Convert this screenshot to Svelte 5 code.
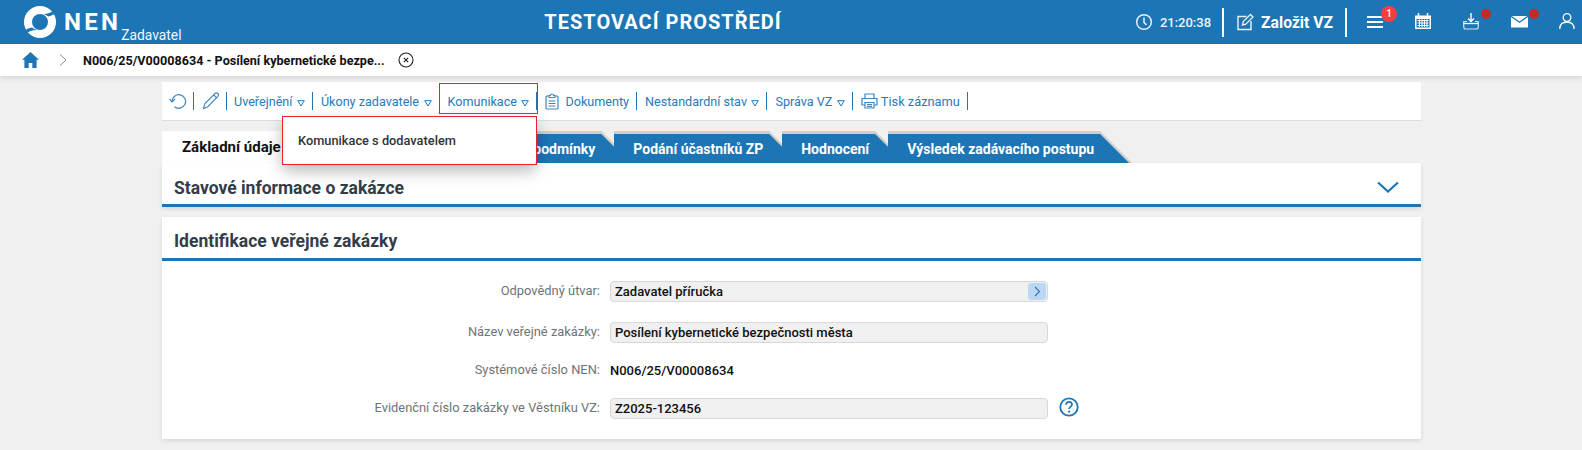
<script>
  const tabs = [
    { label: 'Zadávací podmínky', cls: 'second' },
    { label: 'Podání účastníků ZP', cls: '' },
    { label: 'Hodnocení', cls: '' },
    { label: 'Výsledek zadávacího postupu', cls: '' }
  ];
</script>

<div class="page">
  <header class="top">
    <div class="brand">
      <svg class="logo" viewBox="0 0 32 32" width="32" height="32">
        <circle cx="16" cy="16" r="12" fill="none" stroke="#fff" stroke-width="8"/>
        <path fill="#1c75b5" d="M32 3C28 6.500 24 7.800 19 8c2 .4 3.500 1.200 5 2.400C27 10 30 8.500 32 6.500Z"/>
        <path fill="#1c75b5" transform="rotate(180 16 16)" d="M32 3C28 6.500 24 7.800 19 8c2 .4 3.500 1.200 5 2.400C27 10 30 8.500 32 6.500Z"/>
      </svg>
      <span class="nen">NEN</span>
      <span class="role">Zadavatel</span>
    </div>
    <div class="env">TESTOVACÍ PROSTŘEDÍ</div>
    <div class="tools">
      <svg class="clock" viewBox="0 0 18 18" width="18" height="18"><circle cx="9" cy="9" r="7.300" fill="none" stroke="#e8f2f9" stroke-width="1.500"/><path d="M9 4.500V9.500l2.500 2.500" fill="none" stroke="#e8f2f9" stroke-width="1.500"/></svg>
      <span class="time">21:20:38</span>
      <i class="hsep first"></i>
      <svg class="edit" viewBox="0 0 18 18" width="18" height="18"><path d="M10.500 3.500H2v13h13V8" fill="none" stroke="#e8f2f9" stroke-width="1.400"/><path d="M6.500 12l.8-3.500L14.500 1.500l2.500 2.500-7.200 7.200z" fill="none" stroke="#e8f2f9" stroke-width="1.300"/></svg>
      <span class="create">Založit VZ</span>
      <i class="hsep"></i>
      <span class="ico burger">
        <svg viewBox="0 0 16 14" width="16" height="14"><path d="M0 2h16M0 7h16M0 12h16" stroke="#fff" stroke-width="2"/></svg>
        <b class="badge">1</b>
      </span>
      <span class="ico cal">
        <svg viewBox="0 0 16 16" width="16" height="16"><path d="M0 2.500h16V16H0z" fill="#fff"/><path d="M1.500 6h13v8.500h-13z" fill="#1c75b5"/><path d="M3.500 0v3M12.500 0v3" stroke="#fff" stroke-width="1.500"/><path d="M2.500 7.500h11M2.500 10h11M2.500 12.500h11M4.500 6.500V14M7 6.500V14M9.500 6.500V14M12 6.500V14" stroke="#fff" stroke-width="1"/></svg>
      </span>
      <span class="ico down">
        <svg viewBox="0 0 16 17" width="16" height="17"><path d="M8 0v8M5 5.500l3 3 3-3" fill="none" stroke="#fff" stroke-width="1.400"/><path d="M4 8.500H.7v5c0 1.500.8 2.500 2 2.500h10.600c1.200 0 2-1 2-2.500v-5H12" fill="none" stroke="#cfe3f2" stroke-width="1.200"/><path d="M.7 10.500h14.600" stroke="#fff" stroke-width="1.300"/></svg>
        <b class="dot"></b>
      </span>
      <span class="ico mail">
        <svg viewBox="0 0 17 12" width="17" height="12"><path d="M0 1 8.500 7 17 1v10.500H0z" fill="#fff"/><path d="M.8 0h15.400L8.500 5.400z" fill="#fff"/></svg>
        <b class="dot"></b>
      </span>
      <span class="ico user">
        <svg viewBox="0 0 16 16" width="16" height="16"><circle cx="8" cy="4.500" r="3.800" fill="none" stroke="#fff" stroke-width="1.300"/><path d="M.8 16c0-4.500 3-7 7.200-7s7.200 2.500 7.200 7" fill="none" stroke="#fff" stroke-width="1.300"/></svg>
      </span>
    </div>
  </header>

  <nav class="crumbs">
    <svg class="home" viewBox="0 0 17 16" width="17" height="16"><path d="M8.500 0 0 7.800h2.400V16h4.300v-5h3.600v5h4.300V7.800H17z" fill="#1c75b5"/></svg>
    <svg class="chev" viewBox="0 0 8 12" width="8" height="12"><path d="M1 .5 7 6l-6 5.500" fill="none" stroke="#8a8f94" stroke-width="1"/></svg>
    <span class="crumb">N006/25/V00008634 - Posílení kybernetické bezpe...</span>
    <svg class="close" viewBox="0 0 16 16" width="16" height="16"><circle cx="8" cy="8" r="7" fill="none" stroke="#222" stroke-width="1.100"/><path d="M5.800 5.800l4.400 4.400M10.200 5.800l-4.400 4.400" stroke="#222" stroke-width="1.100"/></svg>
  </nav>

  <main class="wrap">
    <div class="toolbar">
      <svg class="tb-ico undo" viewBox="0 0 18 18" width="18" height="18"><path d="M3 9.500A6.800 6.800 0 1 1 5.500 14.800" fill="none" stroke="#3d87bd" stroke-width="1.200"/><path d="M.5 6.800 3 9.800 6 7" fill="none" stroke="#3d87bd" stroke-width="1.200"/></svg>
      <i class="sep s1"></i>
      <svg class="tb-ico pen" viewBox="0 0 18 18" width="18" height="18"><path d="M1.500 16.500 2.800 11.800 13 1.500c1-.8 2-.8 2.800 0 .8.800.8 1.900 0 2.800L5.800 14.700zM11.800 3l3.300 3.300" fill="none" stroke="#3d87bd" stroke-width="1.100"/></svg>
      <i class="sep s2"></i>
      <span class="it">Uveřejnění<svg class="tri" viewBox="0 0 8 7" width="8" height="7"><path d="M.7.7h6.600L4 6z" fill="none" stroke="#1c75b5" stroke-width="1"/></svg></span>
      <i class="sep"></i>
      <span class="it">Úkony zadavatele<svg class="tri" viewBox="0 0 8 7" width="8" height="7"><path d="M.7.7h6.600L4 6z" fill="none" stroke="#1c75b5" stroke-width="1"/></svg></span>
      <i class="sep"></i>
      <span class="it">Komunikace<svg class="tri" viewBox="0 0 8 7" width="8" height="7"><path d="M.7.7h6.600L4 6z" fill="none" stroke="#1c75b5" stroke-width="1"/></svg></span>
      <i class="sep"></i>
      <svg class="tb-ico doc" viewBox="0 0 14 17" width="14" height="17"><path d="M4 3H2a1 1 0 0 0-1 1v11a1 1 0 0 0 1 1h10a1 1 0 0 0 1-1V4a1 1 0 0 0-1-1h-2" fill="none" stroke="#3d87bd" stroke-width="1.200"/><path d="M4 4.500V2.500h1.500a1.500 1.500 0 0 1 3 0H10v2zM3.500 8h7M3.500 10.500h7M3.500 13h7" fill="none" stroke="#3d87bd" stroke-width="1.100"/></svg>
      <span class="it">Dokumenty</span>
      <i class="sep"></i>
      <span class="it">Nestandardní stav<svg class="tri" viewBox="0 0 8 7" width="8" height="7"><path d="M.7.7h6.600L4 6z" fill="none" stroke="#1c75b5" stroke-width="1"/></svg></span>
      <i class="sep"></i>
      <span class="it">Správa VZ<svg class="tri" viewBox="0 0 8 7" width="8" height="7"><path d="M.7.7h6.600L4 6z" fill="none" stroke="#1c75b5" stroke-width="1"/></svg></span>
      <i class="sep"></i>
      <svg class="tb-ico print" viewBox="0 0 17 16" width="17" height="16"><path d="M4 5V1h9v4M4 12H1V5.500h15V12h-3M4 9.500h9V15H4zM6 11.500h5M6 13.300h5" fill="none" stroke="#3d87bd" stroke-width="1.200"/></svg>
      <span class="it tisk">Tisk záznamu</span>
      <i class="sep"></i>
    </div>

    <div class="menu-flag"></div>
    <div class="menu"><span>Komunikace s dodavatelem</span></div>
    <div class="menu-flag-box"></div>

    <div class="tabs">
      <div class="tab-active">Základní údaje</div>
      {#each tabs as t}
        <div class="tab {t.cls}"><span>{t.label}</span></div>
      {/each}
    </div>

    <section class="panel collapsed">
      <h2>Stavové informace o zakázce</h2>
      <svg class="collapse" viewBox="0 0 22 12" width="22" height="12"><path d="M1 1.500 11 10.500 21 1.500" fill="none" stroke="#1c75b5" stroke-width="2.200"/></svg>
    </section>

    <section class="panel ident">
      <h2>Identifikace veřejné zakázky</h2>
      <div class="form">
        <label>Odpovědný útvar:</label>
        <div class="field"><span>Zadavatel příručka</span><span class="go"><svg viewBox="0 0 7 11" width="7" height="11"><path d="M1 1l4.500 4.500L1 10" fill="none" stroke="#3a6fb5" stroke-width="1.100"/></svg></span></div>
        <span></span>

        <label>Název veřejné zakázky:</label>
        <div class="field"><span>Posílení kybernetické bezpečnosti města</span></div>
        <span></span>

        <label>Systémové číslo NEN:</label>
        <div class="plain">N006/25/V00008634</div>
        <span></span>

        <label>Evidenční číslo zakázky ve Věstníku VZ:</label>
        <div class="field"><span>Z2025-123456</span></div>
        <svg class="help" viewBox="0 0 20 20" width="20" height="20"><circle cx="10" cy="10" r="8.700" fill="none" stroke="#1c75b5" stroke-width="1.800"/><path d="M7 7.800c0-1.900 1.400-3 3-3s3 1 3 2.700c0 2.300-2.900 2.300-2.900 4.500" fill="none" stroke="#1c75b5" stroke-width="1.700"/><circle cx="10.100" cy="14.600" r="1.100" fill="#1c75b5"/></svg>
      </div>
    </section>
  </main>
</div>

<style>
  :global(body) { margin: 0; background: #f0f0f0; }
  .page { font-family: Roboto, "Liberation Sans", sans-serif; height: 450px; overflow: hidden; position: relative; }

  .top { height: 44px; background: #1c75b5; color: #fff; display: flex; align-items: center; }
  .brand { display: flex; width: 533px; padding-left: 24px; box-sizing: border-box; align-items: flex-start; height: 44px; }
  .logo { margin-top: 6px; flex: none; }
  .nen { font-size: 24px; font-weight: 700; letter-spacing: 3.300px; margin-left: 8px; margin-top: 8px; line-height: 28px; }
  .role { font-size: 13.800px; margin-left: 0; margin-top: 26px; line-height: 18px; color: #f2f7fb; }
  .env { font-size: 20px; font-weight: 700; letter-spacing: 1px; width: 260px; text-align: center; }
  .tools { margin-left: auto; display: flex; align-items: center; height: 44px; }
  .clock { margin-right: 7px; }
  .time { font-size: 13px; font-weight: 500; color: #eef5fa; }
  .hsep { width: 2px; height: 29px; background: #fff; margin: 0 12px; }
  .hsep.first { margin-left: 11px; }
  .create { font-size: 15.700px; font-weight: 700; margin-left: 7px; }
  .ico { position: relative; display: block; height: 18px; }
  .ico svg { display: block; }
  .burger { margin-left: 8px; padding-top: 2px; height: 16px; }
  .cal { margin-left: 32px; }
  .down { margin-left: 32px; }
  .mail { margin-left: 32px; padding-top: 3px; height: 15px; }
  .user { margin-left: 31px; margin-right: 7px; }
  .badge { position: absolute; left: 14px; top: -7px; width: 16px; height: 16px; border-radius: 50%; background: #f04040; color: #fff; font-size: 10px; font-weight: 500; line-height: 16px; text-align: center; }
  .dot { position: absolute; left: 18px; top: -4px; width: 10px; height: 10px; border-radius: 50%; background: #c62828; }

  .crumbs { height: 32px; background: #fff; display: flex; align-items: center; box-shadow: 0 2px 5px rgba(0,0,0,.12); position: relative; }
  .home { margin-left: 22px; }
  .chev { margin-left: 20px; }
  .crumb { font-size: 12.600px; font-weight: 700; color: #111; margin-left: 16px; }
  .close { margin-left: 13px; }

  .wrap { margin: 6px 161px 0 162px; position: relative; }
  .toolbar { height: 38px; background: #fff; border-bottom: 1px solid #ddd; display: flex; align-items: center; padding-left: 7px; color: #1c75b5; font-size: 12.600px; }
  .sep { width: 1px; height: 18px; background: #1c75b5; margin: 0 8px 0 7px; flex: none; }
  .sep.s1 { margin: 0 8px 0 6px; }
  .sep.s2 { margin: 0 7px 0 6px; }
  .it { white-space: nowrap; color: #2a7ab6; }
  .tri { margin-left: 4.500px; vertical-align: -1px; }
  .tb-ico { flex: none; }
  .doc { margin-right: 6px; }
  .print { margin-right: 3px; }
  .tisk { font-size: 12.800px; }

  .menu { position: absolute; left: 120px; top: 35px; width: 255px; height: 48px; box-sizing: border-box; background: #fff; border-radius: 6px; box-shadow: 0 6px 16px rgba(0,0,0,.28); z-index: 5; display: flex; align-items: center; padding: 0 0 2px 16px; font-size: 12.800px; color: #333; font-weight: 500; }
  .menu-flag, .menu-flag-box { position: absolute; z-index: 6; border: 1.500px solid #e8212e; box-sizing: border-box; pointer-events: none; }
  .menu-flag { left: 277px; top: 1px; width: 99px; height: 31px; }
  .menu-flag-box { left: 120px; top: 34px; width: 255px; height: 49px; }

  .tabs { display: flex; height: 32px; margin-top: 10px; align-items: flex-end; }
  .tab-active { width: 130px; height: 32px; background: #fff; font-size: 15px; font-weight: 700; color: #111; line-height: 32px; padding-left: 20px; flex: none; white-space: nowrap; }
  .tab { position: relative; height: 32px; flex: none; margin-right: -16.500px; color: #fff; font-size: 14px; font-weight: 700; }
  .tab::before { content: ""; position: absolute; inset: 0 -3px 0 0; background: #cfcfcf; clip-path: polygon(0 0, calc(100% - 32px) 0, 100% 100%, 0 100%); }
  .tab span { position: relative; display: block; height: 29px; margin-top: 3px; line-height: 30px; background: #1c75b5; padding: 0 35px 0 19.500px; clip-path: polygon(0 0, calc(100% - 29px) 0, 100% 100%, 0 100%); white-space: nowrap; }
  .tab.second span { padding-left: 161px; }

  .panel { background: #fff; box-shadow: 0 2px 4px rgba(0,0,0,.1); position: relative; }
  .panel h2 { margin: 0; color: #333d47; padding-left: 12px; line-height: 24px; font-weight: 700; font-size: 17.500px; }
  .collapsed { height: 44px; box-sizing: border-box; border-bottom: 3px solid #1c75b5; padding-top: 13px; }
  .collapse { position: absolute; right: 22px; top: 18px; }
  .ident { margin-top: 10px; height: 222px; padding-top: 12px; box-sizing: border-box; }
  .ident h2 { height: 29px; border-bottom: 3px solid #1c75b5; }

  .form { display: grid; grid-template-columns: 438px 438px 30px; column-gap: 10px; padding-top: 20px; align-items: center; grid-template-rows: 21px 21px 15px 21px; row-gap: 20px; }
  .form label { text-align: right; font-size: 12.900px; color: #6f7377; margin-top: -2px; }
  .field { box-sizing: border-box; height: 21px; background: #f0f0f0; border: 1px solid #d8d8d8; border-radius: 4px; display: flex; align-items: center; justify-content: space-between; padding-left: 4px; font-size: 13px; font-weight: 500; color: #111; }
  .plain { font-size: 13px; font-weight: 500; color: #111; }
  .go { width: 18px; height: 17px; background: #bcd6f5; border-radius: 3px; display: flex; align-items: center; justify-content: center; margin-right: 1px; }
  .help { margin-left: 1px; margin-top: -3px; }
</style>
